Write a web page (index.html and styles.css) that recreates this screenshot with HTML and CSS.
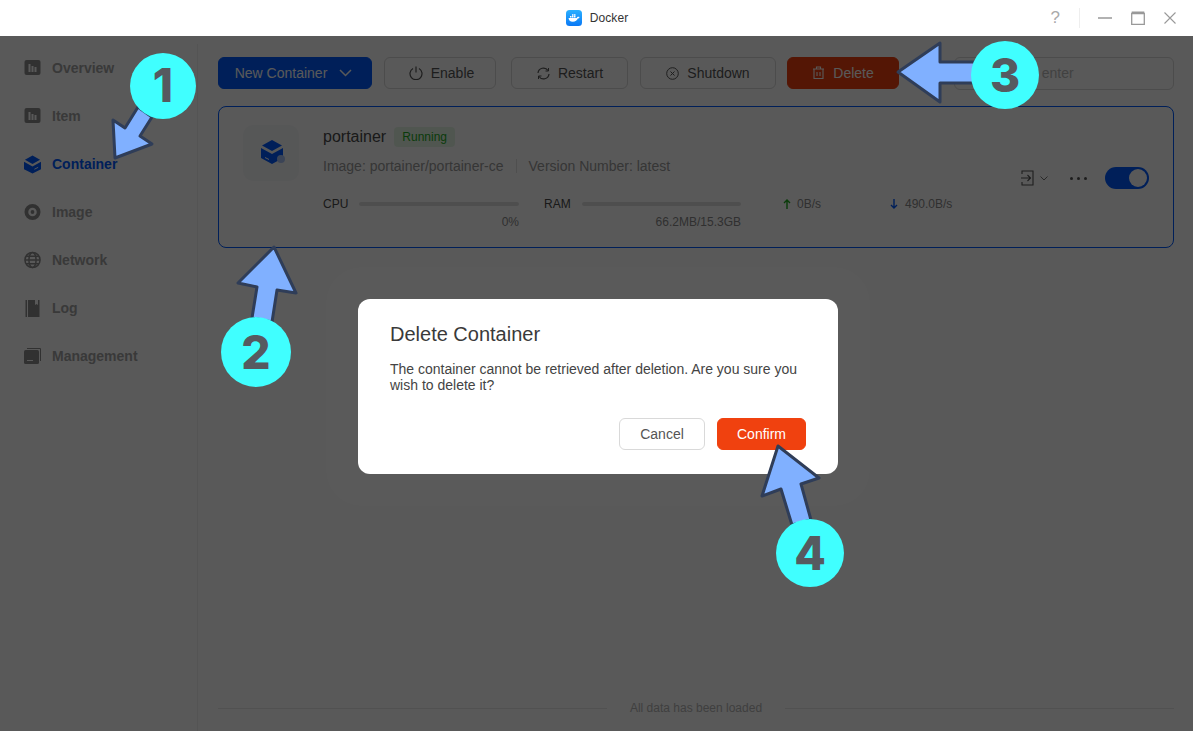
FILE: index.html
```html
<!DOCTYPE html>
<html lang="en">

<head>
    <meta charset="UTF-8">
    <title>Docker</title>
    <link rel="stylesheet" href="styles.css">
</head>

<body>
    <div class="titlebar">
        <div></div>
        <div class="app-title">
            <svg class="app-logo" width="16" height="16" viewBox="0 0 16 16">
                <defs>
                    <linearGradient id="logoBg" x1="0" y1="0" x2="0" y2="1">
                        <stop offset="0" stop-color="#2bb0ff" />
                        <stop offset="1" stop-color="#0a78f5" />
                    </linearGradient>
                </defs>
                <rect width="16" height="16" rx="3.5" fill="url(#logoBg)" />
                <path d="M2.5 8h8.2c.3-.9 1.2-1.4 2.8-1-.2 1-.9 1.5-1.7 1.6-.7 2-2.3 3.2-5 3.2-2.800 0-4-1.500-4.300-3.800z" fill="#fff" />
                <path d="M4 6h1.500v1.500H4zM6 6h1.500v1.500H6zM8 6h1.500v1.500H8zM6 4.200h1.500v1.500H6zM8 4.200h1.500v1.500H8z" fill="#fff" />
            </svg>
            <span>Docker</span>
        </div>
        <div class="win-controls">
            <span class="help">?</span>
            <span class="win-sep"></span>
            <svg class="win-min" width="14" height="14" viewBox="0 0 14 14"><path d="M0 7h14" stroke="#999" stroke-width="1.500" /></svg>
            <svg width="14" height="14" viewBox="0 0 14 14"><path d="M.7 2.500h12.600v11H.7z" fill="none" stroke="#999" stroke-width="1.300" /><path d="M.7 1.500h12.600" stroke="#999" stroke-width="2" /></svg>
            <svg width="12" height="12" viewBox="0 0 12 12"><path d="M.5.500l11 11M11.500.500l-11 11" stroke="#999" stroke-width="1.100" /></svg>
        </div>
    </div>

    <div class="app">
        <div class="sidebar">
            <div class="nav-item">
                <svg width="16" height="16" viewBox="0 0 16 16"><rect width="16" height="15" rx="2" fill="#8e8e8e" /><path d="M4 4h2v8H4zM7 6h2v6H7zM10 7h2v5h-2z" fill="#fff" /></svg>
                Overview
            </div>
            <div class="nav-item">
                <svg width="16" height="16" viewBox="0 0 16 16"><rect width="16" height="15" rx="2" fill="#8e8e8e" /><path d="M4 4h2v8H4zM7 6h2v6H7zM10 7h2v5h-2z" fill="#fff" /></svg>
                Item
            </div>
            <div class="nav-item active">
                <svg width="18" height="19" viewBox="0 0 18 19"><path d="M9 0l8 4.500L9 9 1 4.500z" fill="#005aff" /><path d="M0 6.500l9 5 9-5v8L9 19l-9-4.500z" fill="#005aff" /><path d="M11 14.500l4-2" stroke="#fff" stroke-width="1" /></svg>
                Container
            </div>
            <div class="nav-item">
                <svg width="18" height="18" viewBox="0 0 18 18"><circle cx="9" cy="9" r="6.500" fill="none" stroke="#8e8e8e" stroke-width="4" /><circle cx="9" cy="9" r="2" fill="#8e8e8e" /></svg>
                Image
            </div>
            <div class="nav-item">
                <svg width="18" height="18" viewBox="0 0 18 18" fill="none" stroke="#8e8e8e" stroke-width="1.600"><circle cx="9" cy="9" r="8" /><ellipse cx="9" cy="9" rx="3.800" ry="8" /><path d="M1 9h16M2.200 5h13.600M2.200 13h13.600" /></svg>
                Network
            </div>
            <div class="nav-item">
                <svg width="16" height="17" viewBox="0 0 16 17"><path d="M1 0h1.500v17H1z" fill="#8e8e8e" /><path d="M3.500 0H15v17H3.500z" fill="#8e8e8e" /><path d="M10.500 0h3v5l-1.500-1-1.500 1z" fill="#fff" /></svg>
                Log
            </div>
            <div class="nav-item">
                <svg width="17" height="16" viewBox="0 0 17 16"><path d="M3 .500h13.500V13" fill="none" stroke="#8e8e8e" /><rect y="2" width="15" height="14" rx="1.500" fill="#8e8e8e" /><path d="M3 12.500h6" stroke="#fff" /></svg>
                Management
            </div>
        </div>

        <div class="main">
            <div class="toolbar">
                <div class="btn btn-primary">New Container
                    <svg width="13" height="8" viewBox="0 0 13 8"><path d="M1 1l5.500 5.500L12 1" fill="none" stroke="#fff" stroke-width="1.500" /></svg>
                </div>
                <div class="btn btn-enable">
                    <svg width="14" height="14" viewBox="0 0 14 14" fill="none" stroke="#555" stroke-width="1.200"><path d="M4 2.500a6 6 0 1 0 6 0M7 .500v6" /></svg>
                    Enable
                </div>
                <div class="btn btn-restart">
                    <svg width="13" height="13" viewBox="0 0 13 13" fill="none" stroke="#555" stroke-width="1.200"><path d="M1 6a5.500 5.500 0 0 1 10-2.500M12 7a5.500 5.500 0 0 1-10 2.500" /><path d="M11.500 1v3h-3M1.500 12V9h3" stroke-width="1" /></svg>
                    Restart
                </div>
                <div class="btn btn-shutdown">
                    <svg width="13" height="13" viewBox="0 0 13 13" fill="none" stroke="#555" stroke-width="1"><circle cx="6.500" cy="6.500" r="5.800" /><path d="M4.500 4.500l4 4M8.500 4.500l-4 4" /></svg>
                    Shutdown
                </div>
                <div class="btn btn-delete">
                    <svg width="13" height="14" viewBox="0 0 13 14" fill="none" stroke="#fff" stroke-width="1.100"><path d="M1 3h11M2 3v9.500h9V3M4.500 3V1h4v2M5 6v4M8 6v4" /></svg>
                    Delete
                </div>
                <input class="search" type="text" placeholder="Please enter">
            </div>

            <div class="card">
                <div class="card-icon">
                    <svg width="28" height="28" viewBox="0 0 28 28">
                        <path d="M11 1l10 5.500L11 12 1 6.500z" fill="#005aff" />
                        <path d="M0 9l11 6 11-6v10L11 25 0 19z" fill="#005aff" />
                        <path d="M4 18.500l4 2" stroke="#fff" />
                        <circle cx="20" cy="20" r="4" fill="#a9c4f5" />
                    </svg>
                </div>
                <div class="card-info">
                    <div class="name-row">
                        <span class="name">portainer</span>
                        <span class="badge">Running</span>
                    </div>
                    <div class="meta-row">
                        <span>Image: portainer/portainer-ce</span>
                        <span class="meta-sep"></span>
                        <span>Version Number: latest</span>
                    </div>
                    <div class="stats">
                        <div class="res res-cpu">
                            <div class="res-top"><span>CPU</span><div class="bar"></div></div>
                            <div class="res-val">0%</div>
                        </div>
                        <div class="res res-ram">
                            <div class="res-top"><span>RAM</span><div class="bar"></div></div>
                            <div class="res-val">66.2MB/15.3GB</div>
                        </div>
                        <div class="net net-up">
                            <svg width="8" height="10" viewBox="0 0 8 10" fill="none" stroke="#1dab1d" stroke-width="1.400"><path d="M4 10V1M1 4l3-3 3 3" /></svg>
                            0B/s
                        </div>
                        <div class="net net-down">
                            <svg width="8" height="10" viewBox="0 0 8 10" fill="none" stroke="#005aff" stroke-width="1.400"><path d="M4 0v9M1 6l3 3 3-3" /></svg>
                            490.0B/s
                        </div>
                    </div>
                </div>
                <div class="card-actions">
                    <svg class="enter-icon" width="16" height="16" viewBox="0 0 16 16" fill="none" stroke="#555" stroke-width="1.100"><path d="M1 4V1h11v14H1v-3M0 8h9M6.500 5l3 3-3 3" /></svg>
                    <svg class="enter-caret" width="8" height="5" viewBox="0 0 8 5" fill="none" stroke="#777" stroke-width="1"><path d="M.5.500L4 4 7.500.500" /></svg>
                    <div class="dots"><i></i><i></i><i></i></div>
                    <div class="toggle"><i></i></div>
                </div>
            </div>

            <div class="spacer"></div>

            <div class="loaded">
                <span class="loaded-line"></span>
                <span>All data has been loaded</span>
                <span class="loaded-line"></span>
            </div>
        </div>
    </div>

    <div class="mask"></div>

    <div class="dialog">
        <div class="dialog-title">Delete Container</div>
        <div class="dialog-text">The container cannot be retrieved after deletion. Are you sure you wish to delete it?</div>
        <div class="dialog-btns">
            <div class="dlg-btn dlg-cancel">Cancel</div>
            <div class="dlg-btn dlg-confirm">Confirm</div>
        </div>
    </div>

    <!-- arrows drawn on top of the screenshot -->
    <svg class="arrows" width="1193" height="731" viewBox="0 0 1193 731">
        <g fill="#80b0ff" stroke="#2f3d58" stroke-width="3" stroke-linejoin="round">
            <polygon points="115,158 113,120 125,128 138,107 152,117 140,136 152,144" />
            <polygon points="274,247 296,293 277,290 272,322 252,318 257,287 238,283" />
            <polygon points="898,72 940,43 940,62 985,62 985,83 940,83 940,102" />
            <polygon points="778,446 819,478 801,484 811,520 792,525 781,489 762,496" />
        </g>
        <g fill="#40ffff">
            <circle cx="163" cy="86" r="33" />
            <circle cx="256" cy="352" r="35" />
            <circle cx="1005" cy="75" r="34" />
            <circle cx="810" cy="553" r="34" />
        </g>
        <g class="arrow-num" text-anchor="middle">
            <text x="163" y="102">1</text>
            <text x="256" y="369">2</text>
            <text x="1005" y="92">3</text>
            <text x="810" y="570">4</text>
        </g>
    </svg>
</body>

</html>
```

FILE: styles.css
```css
* {
    box-sizing: border-box;
    padding: 0;
    margin: 0;
}

body {
    width: 1193px;
    height: 731px;
    overflow: hidden;
    position: relative;
    background: #fff;
    font-family: "Liberation Sans", Arial, sans-serif;
    font-size: 14px;
    color: #4a4a4a;
}

.titlebar {
    height: 36px;
    display: grid;
    grid-template-columns: 1fr auto 1fr;
    align-items: center;
    background: #fff;
    position: relative;
    z-index: 5;
}

.app-title {
    display: flex;
    align-items: center;
    gap: 8px;
    padding-left: 1px;
    font-size: 12px;
    letter-spacing: .1px;
    color: #333;
}

.win-controls {
    display: flex;
    align-items: center;
    justify-content: flex-end;
    padding-right: 17px;
    gap: 19px;
}

.help {
    font-size: 17px;
    color: #aaa;
    margin-right: 0;
}

.win-sep {
    width: 1px;
    height: 20px;
    background: #eee;
    margin: 0;
}

.win-min {
    margin-left: -1px;
}

.app {
    height: 695px;
    display: flex;
}

.sidebar {
    width: 198px;
    margin-top: 8px;
    border-right: 1px solid #f0f0f0;
}

.nav-item {
    height: 48px;
    display: flex;
    align-items: center;
    padding-left: 24px;
    font-weight: bold;
    color: #a3a3a3;
    position: relative;
}

.nav-item svg {
    width: 17px;
    margin-right: 11px;
}

.nav-item.active {
    color: #005aff;
}

.main {
    flex: 1;
    display: flex;
    flex-direction: column;
    padding: 20px 19px 16px 20px;
}

.toolbar {
    display: flex;
    align-items: center;
    height: 34px;
}

.btn {
    height: 32px;
    display: flex;
    align-items: center;
    justify-content: center;
    gap: 8px;
    border: 1px solid #d9d9d9;
    border-radius: 6px;
    color: #555;
}

.btn-primary {
    width: 154px;
    gap: 12px;
    padding-right: 3px;
    background: #005aff;
    border-color: #005aff;
    color: #fff;
    opacity: 1;
}

.btn-enable {
    width: 112px;
    margin-left: 12px;
    padding-left: 3px;
}

.btn-restart {
    width: 117px;
    margin-left: 15px;
    padding-left: 1px;
}

.btn-shutdown {
    width: 136px;
    margin-left: 12px;
}

.btn-delete {
    width: 112px;
    margin-left: 11px;
    background: #f0410f;
    border-color: #f0410f;
    color: #fff;
    opacity: 1;
}

.search {
    width: 220px;
    height: 33px;
    margin-left: 55px;
    padding-left: 40px;
    border: 1px solid #d9d9d9;
    border-radius: 6px;
    font-family: inherit;
    font-size: 14px;
    background: #fff;
}

.search::placeholder {
    color: #bbb;
}

.card {
    height: 142px;
    margin-top: 16px;
    display: flex;
    border: 1px solid #005aff;
    border-radius: 8px;
    padding: 18px 24px 0 24px;
}

.card-icon {
    width: 56px;
    height: 56px;
    border-radius: 10px;
    background: #f7f8fa;
    display: flex;
    align-items: center;
    justify-content: center;
}

.card-icon svg {
    margin-left: 7px;
}

.card-info {
    margin-left: 24px;
    width: 640px;
}

.name-row {
    display: flex;
    align-items: center;
    height: 24px;
}

.name {
    font-size: 16px;
    color: #4a4a4a;
}

.badge {
    margin-left: 8px;
    width: 61px;
    height: 20px;
    line-height: 20px;
    text-align: center;
    font-size: 12px;
    border-radius: 4px;
    background: #e6f6e6;
    color: #1dab1d;
}

.meta-row {
    display: flex;
    align-items: center;
    height: 20px;
    margin-top: 7px;
    color: #9a9a9a;
}

.meta-sep {
    width: 1px;
    height: 14px;
    background: #e3e3e3;
    margin: 0 12px;
}

.stats {
    display: flex;
    margin-top: 21px;
    font-size: 12px;
}

.res-cpu {
    width: 196px;
}

.res-ram {
    width: 197px;
    margin-left: 25px;
}

.res-top {
    display: flex;
    align-items: center;
    height: 14px;
    justify-content: space-between;
    color: #4a4a4a;
}

.bar {
    width: 160px;
    height: 4px;
    border-radius: 2px;
    background: #e0e0e0;
}

.res-ram .bar {
    width: 159px;
}

.res-val {
    text-align: right;
    margin-top: 4px;
    color: #8a8a8a;
}

.net {
    display: flex;
    height: 14px;
    align-items: center;
    gap: 6px;
    color: #8a8a8a;
}

.net-up {
    margin-left: 42px;
    width: 107px;
}

.net-down {
    gap: 7px;
}

.card-actions {
    flex: 1;
    display: flex;
    align-items: center;
    height: 22px;
    margin-top: 42px;
    justify-content: flex-end;
}

.enter-caret {
    margin-left: 3px;
    margin-right: 1px;
}

.dots {
    display: flex;
    gap: 4px;
    margin-left: 21px;
}

.dots i {
    width: 3px;
    height: 3px;
    border-radius: 50%;
    background: #555;
}

.toggle {
    width: 44px;
    height: 22px;
    margin-left: 18px;
    border-radius: 11px;
    background: #005aff;
    padding: 2px;
    display: flex;
    justify-content: flex-end;
}

.toggle i {
    width: 18px;
    height: 18px;
    border-radius: 50%;
    background: #fff;
}

.spacer {
    flex: 1;
}

.loaded {
    display: flex;
    align-items: center;
    gap: 23px;
    font-size: 12px;
    color: #b5b5b5;
    height: 14px;
}

.loaded-line {
    flex: 1;
    height: 1px;
    background: #e8e8e8;
}

.mask {
    position: absolute;
    left: 0;
    right: 0;
    top: 36px;
    bottom: 0;
    background: rgba(0, 0, 0, .65);
}

.dialog {
    position: absolute;
    left: 358px;
    top: 299px;
    width: 480px;
    height: 175px;
    background: #fff;
    border-radius: 12px;
    padding: 24px 32px;
    box-shadow: 0 0 0 32px rgba(255, 255, 255, .012);
}

.dialog-title {
    font-size: 20px;
    line-height: 22px;
    color: #3a3a3a;
}

.dialog-text {
    margin-top: 16px;
    line-height: 16px;
    color: #444;
}

.dialog-btns {
    display: flex;
    justify-content: flex-end;
    gap: 12px;
    margin-top: 25px;
}

.dlg-btn {
    height: 32px;
    line-height: 30px;
    text-align: center;
    border-radius: 6px;
}

.dlg-cancel {
    width: 86px;
    border: 1px solid #d9d9d9;
    color: #555;
}

.dlg-confirm {
    width: 89px;
    border: 1px solid #f0410f;
    background: #f0410f;
    color: #fff;
}

.arrows {
    position: absolute;
    left: 0;
    top: 0;
}

.arrow-num {
    font-family: Inter, "Liberation Sans", sans-serif;
    font-weight: 800;
    font-size: 46px;
    fill: #565a60;
}
```
